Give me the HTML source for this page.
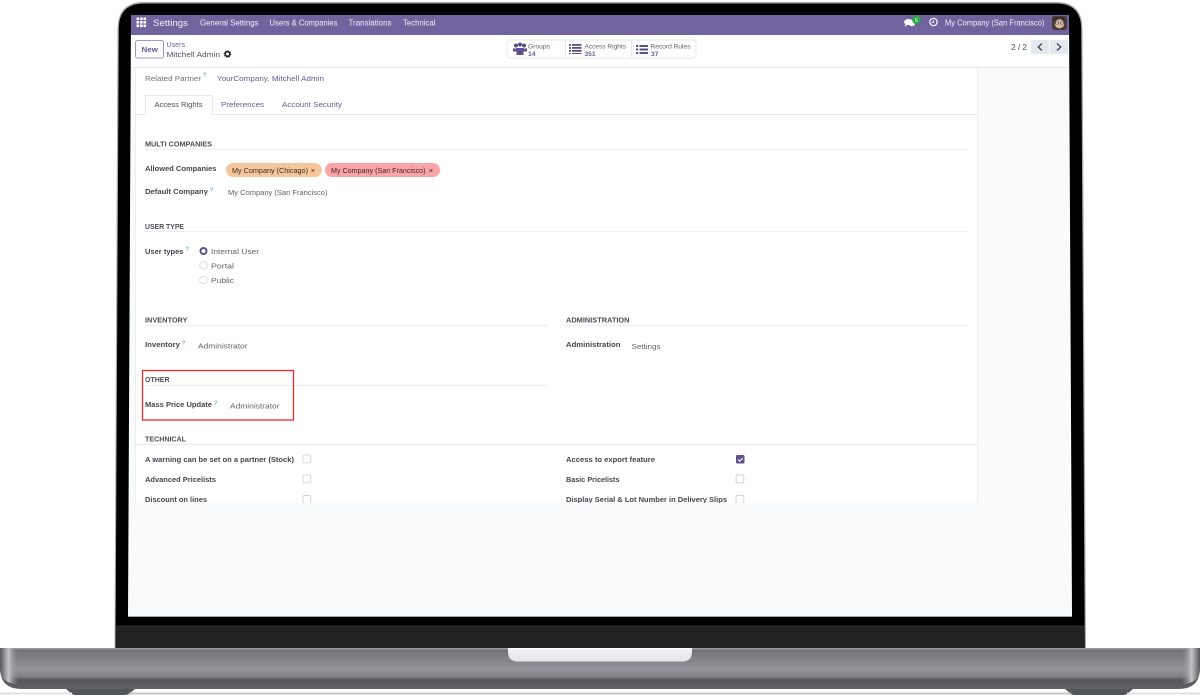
<!DOCTYPE html>
<html lang="en"><head><meta charset="utf-8"><title>Settings</title>
<style>
html,body{margin:0;padding:0;background:#fff;width:1200px;height:697px;overflow:hidden}
svg{display:block;font-family:"Liberation Sans","DejaVu Sans",sans-serif}
.t{filter:blur(.35px)}
.n{font-size:7.8px;fill:#f1eff6}
.l{font-size:7.6px;font-weight:bold;fill:#43464d}
.h{font-size:7.4px;font-weight:bold;fill:#4a4d54}
.v{font-size:7.6px;fill:#5f636b}
.p{font-size:7.6px;fill:#6a5a98}
.g{font-size:6.8px;fill:#5f636b}
.q{font-size:5.500px;font-weight:bold;fill:#5aaec9}
.r{fill:#fff;stroke:#d5d8dd;stroke-width:.9}
.c{fill:#fff;stroke:#d0d3d8;stroke-width:.9}
</style></head><body>
<svg width="1200" height="697" viewBox="0 0 1200 697" xmlns="http://www.w3.org/2000/svg">
<defs>
<linearGradient id="base" x1="0" y1="0" x2="0" y2="1">
<stop offset="0" stop-color="#a9a9ad"/><stop offset=".05" stop-color="#727278"/><stop offset=".25" stop-color="#808187"/><stop offset=".5" stop-color="#94959b"/><stop offset=".68" stop-color="#84858b"/><stop offset=".78" stop-color="#55575b"/><stop offset="1" stop-color="#606166"/>
</linearGradient>
<linearGradient id="gl" x1="0" y1="0" x2="1" y2="0">
<stop offset="0" stop-color="#55565a"/><stop offset=".45" stop-color="#c4c4c8"/><stop offset="1" stop-color="#7d7e84" stop-opacity="0"/>
</linearGradient>
<linearGradient id="gr" x1="1" y1="0" x2="0" y2="0">
<stop offset="0" stop-color="#55565a"/><stop offset=".45" stop-color="#c4c4c8"/><stop offset="1" stop-color="#7d7e84" stop-opacity="0"/>
</linearGradient>
<linearGradient id="notch" x1="0" y1="0" x2="0" y2="1"><stop offset="0" stop-color="#f4f4f6"/><stop offset="1" stop-color="#e3e4e8"/></linearGradient>
</defs>

<!-- laptop lid -->
<path d="M114.500 649 L117.500 28 Q118 2 144 2 L1056 2 Q1082 2 1082.500 28 L1086 649Z" fill="#a8a8ac"/>
<path d="M115.500 649 L118.800 28 Q119.200 3.500 144 3.500 L1056 3.500 Q1080.800 3.500 1081.200 28 L1084.800 649Z" fill="#000"/>
<path d="M116 626.500 L1084.500 626.500 L1084.800 648 L115.500 648Z" fill="#222223"/>
<path d="M116 626 L1084.500 626" stroke="#2c2c2d" stroke-width="1"/>

<!-- screen -->
<path d="M131 15 L1069 15 L1072 616 L128 616Z" fill="#f9fafb"/>
<path d="M128 616.500 L1072 616.500" stroke="#a5a6a9" stroke-width="1"/>
<path d="M131 15 L1069 15 L1069 35 L131 35Z" fill="#71639e"/>
<rect x="131" y="35" width="938" height="33" fill="#fff"/>
<path d="M131 67.500H1069" stroke="#e5e7eb" stroke-width="1"/>
<rect x="135" y="68" width="842" height="435" fill="#fff"/>
<path d="M135.500 68V503M977.500 68V503" stroke="#eceef0" stroke-width="1"/>

<!-- base -->
<path d="M0 648 H1200 V668 Q1200 689 1178 689 H22 Q0 689 0 668Z" fill="url(#base)"/>
<path d="M0 648 H19 V684 Q0 684 0 668Z" fill="url(#gl)"/>
<path d="M1200 648 H1181 V684 Q1200 684 1200 668Z" fill="url(#gr)"/>
<path d="M508 648 H692 V652 Q692 661.500 682 661.500 H518 Q508 661.500 508 652Z" fill="url(#notch)"/>
<path d="M508 648.500H692" stroke="#fff" stroke-width="1"/>
<path d="M66 689 H135 L129 694 Q128 695 124 695 H77 Q73 695 72 694Z" fill="#55565a"/>
<path d="M1065 689 H1133 L1127 694 Q1126 695 1122 695 H1076 Q1072 695 1071 694Z" fill="#55565a"/>
<rect x="0" y="692.500" width="72" height="2" fill="#e2e2e2"/><rect x="129" y="692.500" width="942" height="2" fill="#c4c4c4"/><rect x="1127" y="692.500" width="73" height="2" fill="#e2e2e2"/>

<g class="t">
<!-- navbar -->
<g fill="#fff"><rect x="136.500" y="17.500" width="2.600" height="2.600"/><rect x="140" y="17.500" width="2.600" height="2.600"/><rect x="143.500" y="17.500" width="2.600" height="2.600"/><rect x="136.500" y="21" width="2.600" height="2.600"/><rect x="140" y="21" width="2.600" height="2.600"/><rect x="143.500" y="21" width="2.600" height="2.600"/><rect x="136.500" y="24.500" width="2.600" height="2.600"/><rect x="140" y="24.500" width="2.600" height="2.600"/><rect x="143.500" y="24.500" width="2.600" height="2.600"/></g>
<text x="153" y="26" font-size="9.500" fill="#f1eff6" textLength="35" lengthAdjust="spacingAndGlyphs">Settings</text>
<text class="n" x="200" y="25.500" textLength="58.500" lengthAdjust="spacingAndGlyphs">General Settings</text>
<text class="n" x="269.500" y="25.500" textLength="68" lengthAdjust="spacingAndGlyphs">Users &amp; Companies</text>
<text class="n" x="348.500" y="25.500" textLength="43" lengthAdjust="spacingAndGlyphs">Translations</text>
<text class="n" x="403" y="25.500" textLength="32.500" lengthAdjust="spacingAndGlyphs">Technical</text>
<ellipse cx="908.500" cy="22" rx="4.500" ry="3" fill="#fff"/><path d="M905.500 24l-1 2.500 3-1.500z" fill="#fff"/><ellipse cx="912" cy="24" rx="3" ry="2.200" fill="#fff"/>
<circle cx="916.500" cy="20" r="4.300" fill="#28a745"/><text x="916.500" y="22" font-size="5.500" fill="#fff" text-anchor="middle">6</text>
<circle cx="933.500" cy="22" r="3.700" fill="none" stroke="#fff" stroke-width="1.200"/><path d="M933.500 20v2.300h-1.800" fill="none" stroke="#fff" stroke-width=".8"/>
<text class="n" x="945" y="25.500" textLength="99.500" lengthAdjust="spacingAndGlyphs">My Company (San Francisco)</text>
<rect x="1052" y="16" width="15" height="14" rx="2.500" fill="#4a3c38"/><circle cx="1059.500" cy="24" r="4.600" fill="#dcb89c"/><path d="M1054.500 21q5-6 10 0l-1-3.500h-8z" fill="#2c2522"/><path d="M1055.500 22h3v2h-3zM1060.500 22h3v2h-3z" fill="#f5f5f5" stroke="#222" stroke-width=".5"/><path d="M1056 27q3.500 3 7 0v2.500h-7z" fill="#3c3532"/>

<!-- control panel -->
<rect x="135.500" y="40.500" width="28" height="17.500" rx="2" fill="#fff" stroke="#a297c2" stroke-width="1"/>
<text x="141.500" y="52" font-size="7.600" font-weight="bold" fill="#6a5a98" textLength="16.500" lengthAdjust="spacingAndGlyphs">New</text>
<text class="p" x="166.500" y="47" textLength="18.500" lengthAdjust="spacingAndGlyphs">Users</text>
<text x="166.500" y="57" font-size="7.600" fill="#55556a" textLength="53.500" lengthAdjust="spacingAndGlyphs">Mitchell Admin</text>
<circle cx="227.500" cy="54" r="2.300" fill="none" stroke="#222" stroke-width="1.600"/><circle cx="227.500" cy="54" r="3.300" fill="none" stroke="#222" stroke-width="1" stroke-dasharray="1.200 1.400"/>

<rect x="507" y="40" width="189" height="18" rx="3" fill="#fff" stroke="#e6e9ea" stroke-width="1"/>
<path d="M565.500 40V58M631.500 40V58" stroke="#e6e9ea" stroke-width="1"/>
<g fill="#5d4f8a"><circle cx="516" cy="45.500" r="2"/><circle cx="520" cy="44.500" r="2"/><circle cx="524" cy="45.500" r="2"/><path d="M513 48.500h6v3h-6zM521 48.500h6v3h-6z"/><path d="M516.500 48h7v7h-7z"/></g>
<g fill="#5d4f8a"><rect x="569" y="44" width="2" height="1.800"/><rect x="569" y="47" width="2" height="1.800"/><rect x="569" y="50" width="2" height="1.800"/><rect x="569" y="53" width="2" height="1"/><rect x="572" y="44" width="9.500" height="1.800"/><rect x="572" y="47" width="9.500" height="1.800"/><rect x="572" y="50" width="9.500" height="1.800"/><rect x="572" y="53" width="9.500" height="1"/></g>
<g fill="#5d4f8a"><rect x="636" y="45" width="2.200" height="2"/><rect x="636" y="48.500" width="2.200" height="2"/><rect x="636" y="52" width="2.200" height="2"/><rect x="639.500" y="45" width="8.500" height="2"/><rect x="639.500" y="48.500" width="8.500" height="2"/><rect x="639.500" y="52" width="8.500" height="2"/></g>
<text class="g" x="528" y="48.500" textLength="22" lengthAdjust="spacingAndGlyphs">Groups</text>
<text x="528" y="56" font-size="6.800" font-weight="bold" fill="#6a5a98" textLength="7.500" lengthAdjust="spacingAndGlyphs">14</text>
<text class="g" x="584.500" y="48.500" textLength="41.500" lengthAdjust="spacingAndGlyphs">Access Rights</text>
<text x="584.500" y="56" font-size="6.800" font-weight="bold" fill="#6a5a98" textLength="11" lengthAdjust="spacingAndGlyphs">351</text>
<text class="g" x="650.500" y="48.500" textLength="40" lengthAdjust="spacingAndGlyphs">Record Rules</text>
<text x="651" y="56" font-size="6.800" font-weight="bold" fill="#6a5a98" textLength="7.500" lengthAdjust="spacingAndGlyphs">37</text>

<text x="1011" y="50" font-size="7.800" fill="#4a4d55" textLength="16" lengthAdjust="spacingAndGlyphs">2 / 2</text>
<rect x="1031" y="40" width="37" height="14" rx="2" fill="#e5e8ef"/><path d="M1049.500 40V54" stroke="#fff" stroke-width=".8"/>
<path d="M1042 43.500l-3.800 3.500 3.800 3.500M1057 43.500l3.800 3.500-3.800 3.500" fill="none" stroke="#3b3f48" stroke-width="1.200"/>

<!-- related partner -->
<text x="145" y="81" font-size="7.600" fill="#6f737a" textLength="56" lengthAdjust="spacingAndGlyphs">Related Partner</text>
<text class="q" x="203" y="76.500">?</text>
<text class="p" x="217" y="81" textLength="107" lengthAdjust="spacingAndGlyphs">YourCompany, Mitchell Admin</text>

<!-- tabs -->
<path d="M135 114.500H145.500M212.500 114.500H977" stroke="#e8eaec" stroke-width="1"/>
<path d="M145.500 115V95.500H212.500V115" fill="#fff" stroke="#e8eaec" stroke-width="1"/>
<text x="154.500" y="107" font-size="7.600" fill="#4a4d55" textLength="48" lengthAdjust="spacingAndGlyphs">Access Rights</text>
<text class="p" x="221" y="107" textLength="43" lengthAdjust="spacingAndGlyphs">Preferences</text>
<text class="p" x="282" y="107" textLength="60" lengthAdjust="spacingAndGlyphs">Account Security</text>

<!-- multi companies -->
<text class="h" x="145" y="146.500" textLength="67" lengthAdjust="spacingAndGlyphs">MULTI COMPANIES</text>
<path d="M145 149.500H968" stroke="#eceef0" stroke-width="1"/>
<text class="l" x="145" y="171" textLength="71.500" lengthAdjust="spacingAndGlyphs">Allowed Companies</text>
<rect x="226" y="163" width="96" height="14" rx="7" fill="#f6c79c"/>
<text x="232" y="173" font-size="7.400" fill="#3b2a1c" textLength="76" lengthAdjust="spacingAndGlyphs">My Company (Chicago)</text>
<text x="313" y="173" font-size="7.500" fill="#3b2a1c" text-anchor="middle">×</text>
<rect x="325" y="163" width="115" height="14" rx="7" fill="#f9a4a6"/>
<text x="331" y="173" font-size="7.400" fill="#3f1f22" textLength="94.500" lengthAdjust="spacingAndGlyphs">My Company (San Francisco)</text>
<text x="431" y="173" font-size="7.500" fill="#3f1f22" text-anchor="middle">×</text>
<text class="l" x="145" y="194" textLength="63" lengthAdjust="spacingAndGlyphs">Default Company</text>
<text class="q" x="210" y="191.500">?</text>
<text class="v" x="228" y="195" textLength="99.500" lengthAdjust="spacingAndGlyphs">My Company (San Francisco)</text>

<!-- user type -->
<text class="h" x="145" y="229" textLength="39" lengthAdjust="spacingAndGlyphs">USER TYPE</text>
<path d="M145 231.500H968" stroke="#eceef0" stroke-width="1"/>
<text class="l" x="145" y="254" textLength="38.500" lengthAdjust="spacingAndGlyphs">User types</text>
<text class="q" x="185.500" y="250.500">?</text>
<circle cx="203.500" cy="251" r="3" fill="#fff" stroke="#5d4f8a" stroke-width="2"/>
<circle class="r" cx="203.500" cy="265.500" r="3.800"/>
<circle class="r" cx="203.500" cy="280" r="3.800"/>
<text class="v" x="211" y="254" textLength="48" lengthAdjust="spacingAndGlyphs">Internal User</text>
<text class="v" x="211" y="268.500" textLength="23" lengthAdjust="spacingAndGlyphs">Portal</text>
<text class="v" x="211" y="283" textLength="23" lengthAdjust="spacingAndGlyphs">Public</text>

<!-- inventory / administration -->
<text class="h" x="145" y="322.500" textLength="42.500" lengthAdjust="spacingAndGlyphs">INVENTORY</text>
<path d="M145 325.500H548" stroke="#eceef0" stroke-width="1"/>
<text class="h" x="566" y="322.500" textLength="63.500" lengthAdjust="spacingAndGlyphs">ADMINISTRATION</text>
<path d="M566 325.500H968" stroke="#eceef0" stroke-width="1"/>
<text class="l" x="145" y="347" textLength="35" lengthAdjust="spacingAndGlyphs">Inventory</text>
<text class="q" x="182" y="344.500">?</text>
<text class="v" x="198" y="348.500" textLength="49.500" lengthAdjust="spacingAndGlyphs">Administrator</text>
<text class="l" x="566" y="347" textLength="54.500" lengthAdjust="spacingAndGlyphs">Administration</text>
<text class="v" x="631.500" y="349" textLength="29" lengthAdjust="spacingAndGlyphs">Settings</text>

<!-- other -->
<text class="h" x="145" y="382" textLength="24.500" lengthAdjust="spacingAndGlyphs">OTHER</text>
<path d="M145 385.500H548" stroke="#eceef0" stroke-width="1"/>
<text class="l" x="145" y="407" textLength="67" lengthAdjust="spacingAndGlyphs">Mass Price Update</text>
<text class="q" x="214" y="404.500">?</text>
<text class="v" x="230" y="408.500" textLength="49.500" lengthAdjust="spacingAndGlyphs">Administrator</text>
<rect x="142.500" y="370.500" width="151" height="49.500" fill="none" stroke="#ee2a2a" stroke-width="1.300"/>

<!-- technical -->
<text class="h" x="145" y="441.500" textLength="41" lengthAdjust="spacingAndGlyphs">TECHNICAL</text>
<path d="M135 444.500H977" stroke="#e8eaec" stroke-width="1"/>
<text class="l" x="145" y="462" textLength="149" lengthAdjust="spacingAndGlyphs">A warning can be set on a partner (Stock)</text>
<rect class="c" x="303" y="455" width="7.800" height="7.800" rx="1.500"/>
<text class="l" x="145" y="482" textLength="71" lengthAdjust="spacingAndGlyphs">Advanced Pricelists</text>
<rect class="c" x="303" y="475" width="7.800" height="7.800" rx="1.500"/>
<text class="l" x="145" y="502" textLength="62" lengthAdjust="spacingAndGlyphs">Discount on lines</text>
<rect class="c" x="303" y="495.500" width="7.800" height="7.800" rx="1.500"/>
<text class="l" x="566" y="462" textLength="89" lengthAdjust="spacingAndGlyphs">Access to export feature</text>
<rect x="736" y="455" width="8.500" height="8.500" rx="1.500" fill="#5d4f8a"/><path d="M738 459.500l1.700 1.700 3-3" fill="none" stroke="#fff" stroke-width="1.100"/>
<text class="l" x="566" y="482" textLength="53.500" lengthAdjust="spacingAndGlyphs">Basic Pricelists</text>
<rect class="c" x="736" y="475" width="7.800" height="7.800" rx="1.500"/>
<text class="l" x="566" y="502" textLength="161" lengthAdjust="spacingAndGlyphs">Display Serial &amp; Lot Number in Delivery Slips</text>
<rect class="c" x="736" y="495.500" width="7.800" height="7.800" rx="1.500"/>
</g>
<!-- cut off content below the form -->
<rect x="129" y="503" width="942" height="113" fill="#f9fafb"/>
</svg>
</body></html>
